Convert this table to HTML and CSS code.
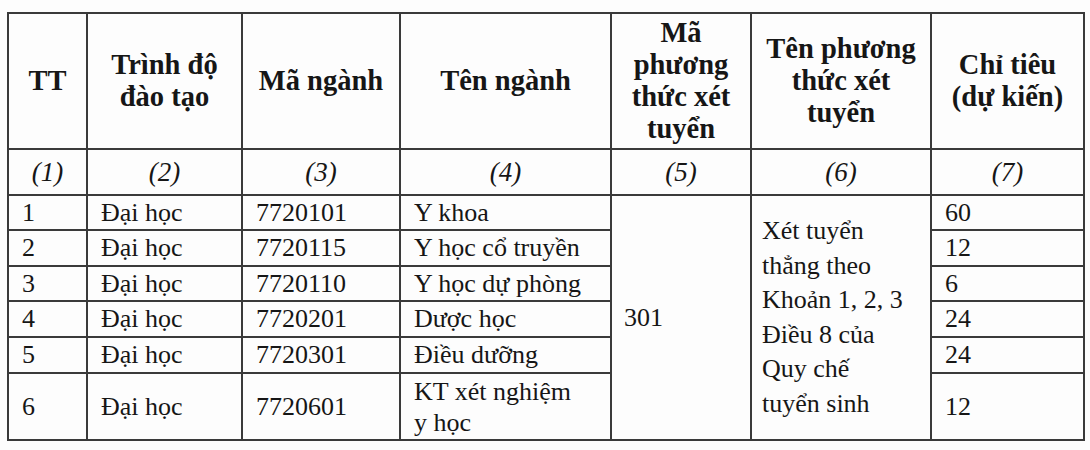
FILE: index.html
```html
<!DOCTYPE html>
<html lang="vi">
<head>
<meta charset="utf-8">
<title>Chỉ tiêu tuyển sinh</title>
<link rel="stylesheet" href="styles.css">
</head>
<body>
<table class="quota">
  <colgroup>
    <col class="c1"><col class="c2"><col class="c3"><col class="c4"><col class="c5"><col class="c6"><col class="c7">
  </colgroup>
  <thead>
    <tr class="head">
      <th>TT</th>
      <th>Trình độ<br>đào tạo</th>
      <th>Mã ngành</th>
      <th>Tên ngành</th>
      <th>Mã<br>phương<br>thức xét<br>tuyển</th>
      <th>Tên phương<br>thức xét<br>tuyển</th>
      <th>Chỉ tiêu<br>(dự kiến)</th>
    </tr>
    <tr class="idx">
      <td>(1)</td><td>(2)</td><td>(3)</td><td>(4)</td><td>(5)</td><td>(6)</td><td>(7)</td>
    </tr>
  </thead>
  <tbody>
    <tr class="r35">
      <td>1</td><td>Đại học</td><td>7720101</td><td>Y khoa</td>
      <td rowspan="6" class="merged">301</td>
      <td rowspan="6" class="merged method">Xét tuyển<br>thẳng theo<br>Khoản 1, 2, 3<br>Điều 8 của<br>Quy chế<br>tuyển sinh</td>
      <td>60</td>
    </tr>
    <tr class="r36"><td>2</td><td>Đại học</td><td>7720115</td><td>Y học cổ truyền</td><td>12</td></tr>
    <tr class="r35"><td>3</td><td>Đại học</td><td>7720110</td><td>Y học dự phòng</td><td>6</td></tr>
    <tr class="r36"><td>4</td><td>Đại học</td><td>7720201</td><td>Dược học</td><td>24</td></tr>
    <tr class="r36"><td>5</td><td>Đại học</td><td>7720301</td><td>Điều dưỡng</td><td>24</td></tr>
    <tr class="r67"><td>6</td><td>Đại học</td><td>7720601</td><td class="two">KT xét nghiệm<br>y học</td><td>12</td></tr>
  </tbody>
</table>
</body>
</html>
```
FILE: styles.css
```css
html, body {
  margin: 0;
  padding: 0;
  background: #fdfdfd;
}
body {
  padding: 12px 0 0 7px;
  font-family: "Liberation Serif", "Times New Roman", serif;
  color: #161616;
}
.quota {
  border-collapse: collapse;
  table-layout: fixed;
  width: 1076px;
}
.c1 { width: 79px; }
.c2 { width: 155px; }
.c3 { width: 158px; }
.c4 { width: 211px; }
.c5 { width: 140px; }
.c6 { width: 180px; }
.c7 { width: 153px; }
.quota th,
.quota td {
  border: 2px solid #3a3a3a;
  padding: 0 6px 0 13px;
  font-size: 26px;
  line-height: 30px;
  vertical-align: middle;
  text-align: left;
  font-weight: normal;
}
.quota .head th {
  height: 134px;
  font-weight: bold;
  font-size: 28.5px;
  text-align: center;
  padding: 0 2px;
  line-height: 32px;
}
.quota .idx td {
  height: 44px;
  font-style: italic;
  font-size: 27px;
  text-align: center;
  padding: 0;
}
.r35 td { height: 33px; }
.r36 td { height: 34px; }
.r67 td { height: 65px; }
.quota td.merged { padding-left: 12px; }
.quota td.method {
  line-height: 34.5px;
  padding-left: 10px;
}
.quota td.two { line-height: 31px; }
```
